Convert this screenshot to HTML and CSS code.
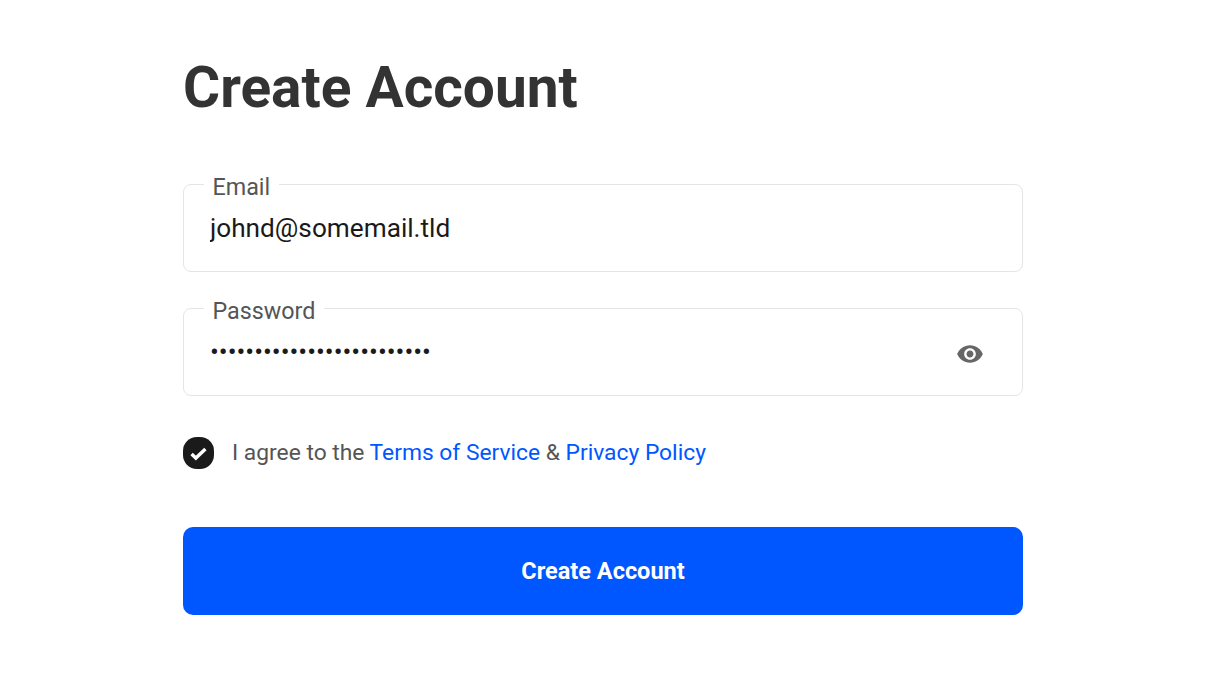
FILE: index.html
```html
<!DOCTYPE html>
<html lang="en">
<head>
  <meta charset="UTF-8" />
  <title>Create Account</title>
  <link rel="stylesheet" href="styles.css">
</head>
<body>
  <form class="signup">
    <h1 class="title">Create Account</h1>

    <fieldset class="field">
      <legend class="field-label">Email</legend>
      <input class="field-input" type="text" value="johnd@somemail.tld">
    </fieldset>

    <fieldset class="field">
      <legend class="field-label">Password</legend>
      <input class="field-input" type="password" value="1234567890123456789012345">
      <svg class="eye" viewBox="0 0 24 24" width="28" height="28" aria-hidden="true">
        <path d="M12 4.500C7 4.500 2.730 7.610 1 12c1.730 4.390 6 7.500 11 7.500s9.270-3.110 11-7.500c-1.730-4.390-6-7.500-11-7.500zM12 17c-2.760 0-5-2.240-5-5s2.240-5 5-5 5 2.240 5 5-2.240 5-5 5zm0-8c-1.660 0-3 1.340-3 3s1.340 3 3 3 3-1.340 3-3-1.340-3-3-3z"/>
      </svg>
    </fieldset>

    <div class="agree">
      <span class="check">
        <svg viewBox="0 0 16 16" width="17" height="17" aria-hidden="true">
          <path d="M1.500 8.500l4 3.800L14.500 3.800" fill="none" stroke="#fff" stroke-width="3.200"/>
        </svg>
      </span>
      <span>I agree to the <a href="#">Terms of Service</a> &amp; <a href="#">Privacy Policy</a></span>
    </div>

    <button class="submit" type="button">Create Account</button>
  </form>
</body>
</html>
```

FILE: styles.css
```css
body {
  margin: 0;
  background-color: #fff;
  font-family: Roboto, sans-serif;
}
.signup {
  width: 840px;
  margin-left: 183px;
  padding-top: 55px;
}
.title {
  margin: 0 0 47px;
  font-size: 56.8px;
  line-height: 66px;
  font-weight: 700;
  color: #333;
}
.field {
  position: relative;
  display: flex;
  align-items: flex-start;
  height: 104px;
  box-sizing: border-box;
  margin: 0 0 20px;
  padding: 0 26px;
  border: 1px solid #e5e5e5;
  border-radius: 8px;
}
.field-label {
  margin-left: -6.500px;
  padding: 7px 9px 1px;
  font-size: 23.3px;
  line-height: 24px;
  color: #555;
}
.field-input {
  flex: 1;
  height: 40px;
  margin-top: 8px;
  padding: 0;
  border: none;
  outline: none;
  font-family: Roboto, sans-serif;
  font-size: 26.2px;
  color: #1a1a1a;
}
.eye {
  position: absolute;
  right: 38px;
  top: 15.500px;
  fill: #666;
}
.agree {
  display: flex;
  align-items: center;
  gap: 18px;
  margin-top: 41px;
  font-size: 22.8px;
  line-height: 32px;
  color: #555;
}
.check {
  display: flex;
  align-items: center;
  justify-content: center;
  width: 31px;
  height: 32px;
  border-radius: 14px;
  background-color: #1a1a1a;
}
.agree a {
  color: #0057ff;
  text-decoration: none;
}
.submit {
  display: block;
  width: 100%;
  height: 88px;
  margin-top: 58px;
  border: none;
  border-radius: 10px;
  background-color: #0057ff;
  color: #fff;
  font-family: Roboto, sans-serif;
  font-size: 23.5px;
  font-weight: 700;
}
```
